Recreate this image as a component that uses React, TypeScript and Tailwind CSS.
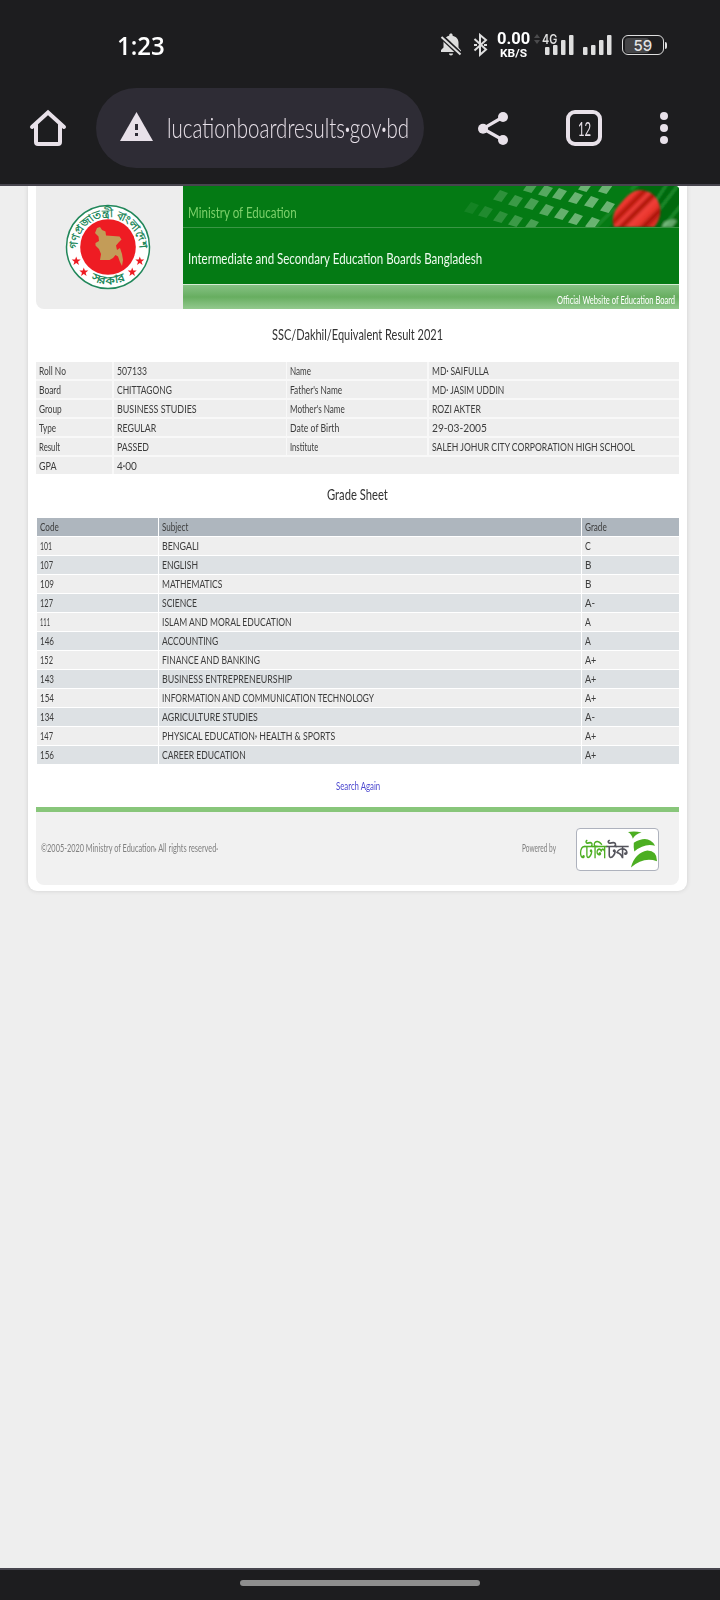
import { useLayoutEffect, useRef, useState } from "react";

/** Single-line text condensed horizontally to a given advance width. */
function Fit({ text, w, className = "", raise = true }: { text: string; w: number; className?: string; raise?: boolean }) {
  const ref = useRef<HTMLSpanElement>(null);
  const [scale, setScale] = useState(1);
  useLayoutEffect(() => {
    const natural = ref.current?.offsetWidth ?? 0;
    if (natural) setScale(w / natural);
  }, [text, w]);
  return (
    <span className={`block shrink-0 text-left ${className}`} style={{ width: w }}>
      <span ref={ref} className="inline-block origin-left whitespace-nowrap" style={{ transform: `scaleX(${scale})` }}>
        {raise
          ? text.split(/([.,])/).map((part, i) =>
              i % 2 ? (
                <span key={i} className="align-[0.22em] font-bold leading-[0]">{part}</span>
              ) : (
                part
              ),
            )
          : text}
      </span>
    </span>
  );
}

type Cell = [string, number];

const info: Cell[][] = [
  [["Roll No", 27], ["507133", 30], ["Name", 21], ["MD. SAIFULLA", 57]],
  [["Board", 22], ["CHITTAGONG", 55], ["Father's Name", 52], ["MD. JASIM UDDIN", 72]],
  [["Group", 23], ["BUSINESS STUDIES", 80], ["Mother's Name", 55], ["ROZI AKTER", 49]],
  [["Type", 17], ["REGULAR", 39], ["Date of Birth", 49], ["29-03-2005", 55]],
  [["Result", 21], ["PASSED", 32], ["Institute", 28], ["SALEH JOHUR CITY CORPORATION HIGH SCHOOL", 203]],
];

const grades: [Cell, Cell, Cell][] = [
  [["101", 12], ["BENGALI", 37], ["C", 6]],
  [["107", 13], ["ENGLISH", 36], ["B", 6]],
  [["109", 14], ["MATHEMATICS", 60], ["B", 6]],
  [["127", 13], ["SCIENCE", 35], ["A-", 10]],
  [["111", 10], ["ISLAM AND MORAL EDUCATION", 130], ["A", 6]],
  [["146", 14], ["ACCOUNTING", 56], ["A", 6]],
  [["152", 13], ["FINANCE AND BANKING", 98], ["A+", 11]],
  [["143", 14], ["BUSINESS ENTREPRENEURSHIP", 130], ["A+", 11]],
  [["154", 14], ["INFORMATION AND COMMUNICATION TECHNOLOGY", 212], ["A+", 11]],
  [["134", 14], ["AGRICULTURE STUDIES", 96], ["A-", 10]],
  [["147", 13], ["PHYSICAL EDUCATION, HEALTH & SPORTS", 173], ["A+", 11]],
  [["156", 14], ["CAREER EDUCATION", 84], ["A+", 11]],
];

function Bars() {
  return (
    <svg width="29" height="22" viewBox="0 0 29 22" fill="#dedede">
      <rect x="0" y="13" width="4.500" height="8" rx="1" />
      <rect x="8" y="11" width="4.500" height="10" rx="1" />
      <rect x="16" y="6" width="4.500" height="15" rx="1" />
      <rect x="24" y="1" width="4.500" height="20" rx="1" />
    </svg>
  );
}

function StatusBar() {
  return (
    <div className="flex h-[88px] items-start pl-[117px] pt-[30px] font-['Inter','Roboto',sans-serif] text-white">
      <div className="w-[323px] pt-[3px] font-['Open_Sans',sans-serif] text-[25px] font-semibold leading-[25px]">
        <Fit text="1:23" w={48} />
      </div>
      <svg className="mt-[3px]" width="22" height="24" viewBox="0 0 22 24">
        <path d="M11 .5c1 0 1.600.7 1.600 1.600v.7c3.600.8 5.900 3.400 5.900 6.700v5l2.500 3v1.500H1V17l2.500-2.500V9.500c0-3.300 2.300-6 5.700-6.700v-.7C9.200 1.200 10 .5 11 .5zM9 20.500h4c0 1.200-.8 2-2 2s-2-.8-2-2z" fill="#dedede" />
        <path d="M1 3l20 19" stroke="#1d1d1f" strokeWidth="5" />
        <path d="M1.500 4l19 17.500" stroke="#dedede" strokeWidth="2" />
      </svg>
      <svg className="ml-[11px] mt-[3px]" width="16" height="24" viewBox="0 0 16 24" fill="none" stroke="#dedede" strokeWidth="2">
        <path d="M1.500 6l11.500 10.500-6 5.200V2l6 5L1.500 17.500" />
        <path d="M1 12h3M11 12h3" strokeWidth="2.200" />
      </svg>
      <div className="ml-[7px] flex w-[34px] flex-col items-center font-['Roboto',sans-serif] font-bold">
        <Fit raise={false} text="0.00" w={33} className="mt-px text-[16px] leading-[16px]" />
        <Fit text="KB/S" w={27} className="text-[11.500px] leading-[12px]" />
      </div>
      <svg className="ml-[4px] mt-[4px]" width="6" height="10" viewBox="0 0 6 10" fill="#4b4b4d">
        <path d="M3 0l3 4H0zM3 10L0 6h6z" />
      </svg>
      <div className="relative ml-[5px] mt-[4px]">
        <Bars />
        <div className="absolute -left-[3px] top-0 bg-[#1d1d1f] text-[#dedede]">
          <Fit text="4G" w={15} className="text-[13px] font-semibold leading-[10px]" />
        </div>
      </div>
      <div className="ml-[9px] mt-[4px]"><Bars /></div>
      <div className="ml-[10px] mt-[5px] flex items-center">
        <div className="flex h-[20px] w-[42px] items-center rounded-[6px] border-[1.500px] border-[#dedede] p-[1.500px]">
          <div className="flex h-full w-[24px] items-center rounded-[3px] bg-[#454547] pl-[9px]">
            <Fit text="59" w={19} className="text-[15px] font-medium leading-[15px] text-[#e4e4e4]" />
          </div>
        </div>
        <div className="ml-[1px] h-[7px] w-[2px] rounded-r bg-[#dedede]" />
      </div>
    </div>
  );
}

function Toolbar() {
  return (
    <div className="flex h-[96px] items-start">
      <svg className="ml-[29px] mt-[21px]" width="38" height="38" viewBox="0 0 38 38" fill="none" stroke="#e8e1e9" strokeWidth="4" strokeLinecap="round" strokeLinejoin="round">
        <path d="M3 18L19 3.500 35 18" strokeLinejoin="miter" />
        <path d="M7 15.500V33a2 2 0 0 0 2 2h20a2 2 0 0 0 2-2V15.500" />
      </svg>
      <div className="ml-[29px] flex h-[80px] w-[328px] items-start rounded-full bg-[#2e2c35] pl-[24px]">
        <svg className="mt-[24px]" width="33" height="30" viewBox="0 0 33 30">
          <path d="M16.500 0L33 29H0z" fill="#e8e1e9" />
          <path d="M15 12h3v6h-3zM15 21h3v3h-3z" fill="#2e2c35" />
        </svg>
        <Fit text="lucationboardresults.gov.bd" w={242} className="ml-[14px] mt-[19px] text-[28px] font-light leading-[40px] text-[#e8e1e9]" />
      </div>
      <svg className="ml-[54px] mt-[23px]" width="30" height="35" viewBox="0 0 30 35" fill="#e8e1e9">
        <path d="M25 6L5 17.700 25 29" fill="none" stroke="#e8e1e9" strokeWidth="3.200" />
        <circle cx="25" cy="6" r="5" />
        <circle cx="5" cy="17.700" r="5" />
        <circle cx="25" cy="29" r="5" />
      </svg>
      <div className="ml-[58px] mt-[22px] flex h-[36px] w-[36px] items-center justify-center rounded-[9px] border-4 border-[#e8e1e9]">
        <Fit text="12" w={13} className="text-[20px] leading-[22px] text-[#e8e1e9]" />
      </div>
      <svg className="ml-[58px] mt-[23px]" width="8" height="34" viewBox="0 0 8 34" fill="#e8e1e9">
        <circle cx="4" cy="5" r="4" />
        <circle cx="4" cy="17" r="4" />
        <circle cx="4" cy="29" r="4" />
      </svg>
    </div>
  );
}

function Emblem() {
  const star = "M0-4.500L1.100-1.400 4.500-1.400 1.800.7 2.800 4 0 2.100-2.800 4-1.800.7-4.500-1.400-1.100-1.400z";
  return (
    <svg width="86" height="86" viewBox="-43 -43 86 86">
      <circle r="41.500" fill="#fff" stroke="#21875a" strokeWidth="1.500" />
      <circle r="27.800" fill="#ee1c23" />
      <path
        d="M-11-19L-8-20-6-17-2.500-15.500-2-11.500 5-11 11.500-10.500 13.500-7.500 11-5 8-1.500 9 3 12 1 14 7 15 13 14 19 12 15 10 9.500 7.500 8 5 11 1.500 13-8 13-7 7-9 2-12.500-1.500-12.500-4-9-6-9.500-10.500-13-14z"
        fill="#c39c58"
      />
      <g fill="#ee1c23">
        <path d={star} transform="translate(-31.800 14)" />
        <path d={star} transform="translate(-24.200 25)" />
        <path d={star} transform="translate(31.800 14)" />
        <path d={star} transform="translate(24.200 25)" />
      </g>
      <path id="arc-top" d="M-30.800 5A31 31 0 1 1 30.800 5" fill="none" />
      <path id="arc-bottom" d="M-37 0A37 37 0 0 0 37 0" fill="none" />
      <g fill="#21875a" fontSize="11" fontWeight="700" textAnchor="middle">
        <text><textPath href="#arc-top" startOffset="50%" textLength="98" lengthAdjust="spacingAndGlyphs">গণপ্রজাতন্ত্রী বাংলাদেশ</textPath></text>
        <text><textPath href="#arc-bottom" startOffset="50%" textLength="36" lengthAdjust="spacingAndGlyphs">সরকার</textPath></text>
      </g>
    </svg>
  );
}

const tiles = [
  [133, 0], [153, 2],
  [78, 1], [93, 5], [107, 8], [123, 12], [139, 16], [155, 21],
  [48, 10], [63, 15], [79, 18], [94, 24], [109, 28], [123, 33], [140, 37],
  [19, 22], [33, 26], [48, 31], [63, 35], [79, 39],
];

function FlagArt() {
  return (
    <svg className="block" width="226" height="41" viewBox="0 0 226 41">
      <defs>
        <linearGradient id="ball" x1="168" y1="8" x2="200" y2="40" gradientUnits="userSpaceOnUse">
          <stop offset="0" stopColor="#dd3024" />
          <stop offset=".2" stopColor="#f03a30" />
          <stop offset=".32" stopColor="#b0140b" />
          <stop offset=".42" stopColor="#f0403a" />
          <stop offset=".52" stopColor="#a8120a" />
          <stop offset=".62" stopColor="#f0403a" />
          <stop offset=".76" stopColor="#e8332b" />
          <stop offset=".86" stopColor="#a8160c" />
          <stop offset="1" stopColor="#e63229" />
        </linearGradient>
        <filter id="soft"><feGaussianBlur stdDeviation="1" /></filter>
      </defs>
      <g filter="url(#soft)">
        <path d="M230-4v50h-78l24-24 12-26z" fill="#05690f" />
        <path d="M142 42l20-20M178 4l8-8M206 46l28-34M214-2l-12 18M226-2l-20 26" stroke="#1f8a2c" strokeWidth="3" />
        <path d="M211 36l9-3 4 2-5 6h-10z" fill="#d9f2d9" opacity=".45" />
      </g>
      {tiles.map(([x, y]) => (
        <path key={`${x}-${y}`} d={`M${x - 1} ${y - 6}l8 3-6.500 9-8.500-2.500z`} fill="#d9f2d9" opacity={Math.min(0.48, x / 240)} />
      ))}
      <path d="M161 41c-3-9 0-17 7-24C177 6 184 2 193 5c12 3 16 17 14 24-1 5-3 9-6 12z" fill="url(#ball)" filter="url(#soft)" />
    </svg>
  );
}

function Header() {
  return (
    <div className="flex h-[123px]">
      <div className="flex w-[147px] justify-center rounded-bl-[8px] bg-[#ededed] pr-[4px] pt-[18px]">
        <Emblem />
      </div>
      <div className="flex-1">
        <div className="flex h-[41px] justify-between overflow-hidden rounded-tr-[4px] bg-[#047a14]">
          <Fit text="Ministry of Education" w={109} className="ml-[5px] mt-[16px] text-[15.500px] leading-[20px] text-[#7dd06b]" />
          <FlagArt />
        </div>
        <div className="h-[57px] border-t border-[#3a9645] bg-[#047a14] pt-[19px]">
          <Fit text="Intermediate and Secondary Education Boards Bangladesh" w={294} className="ml-[5px] text-[16px] leading-[22px] text-[#effbef]" />
        </div>
        <div className="flex h-[25px] justify-end border-t border-[#d5ecd3] bg-linear-to-b from-[#86c184] via-[#67ae60] to-[#93c98e] pr-[4px] pt-[8px]">
          <Fit text="Official Website of Education Board" w={118} className="text-[11px] leading-[14px] text-white" />
        </div>
      </div>
    </div>
  );
}

function InfoTable() {
  return (
    <div className="mt-[16px] flex w-[643px] flex-col gap-[2px] bg-[#f8f8f8] text-[11.500px] leading-[17px] text-[#3c3c3c]">
      {info.map((row) => (
        <div key={row[0][0]} className="grid h-[17px] grid-cols-[76px_172px_140px_1fr] gap-x-[1.500px]">
          {row.map(([t, w]) => (
            <div key={t} className="bg-[#eee] pl-[3px]"><Fit text={t} w={w} /></div>
          ))}
        </div>
      ))}
      <div className="grid h-[17px] grid-cols-[76px_1fr] gap-x-[1.500px]">
        <div className="bg-[#eee] pl-[3px]"><Fit text="GPA" w={18} /></div>
        <div className="bg-[#eee] pl-[3px]"><Fit text="4.00" w={20} /></div>
      </div>
    </div>
  );
}

function GradeTable() {
  return (
    <div className="ml-px mt-[12px] flex w-[642px] flex-col gap-px text-[11.500px] leading-[17px] text-[#3c3c3c]">
      <div className="grid h-[18px] grid-cols-[121px_422px_1fr] gap-x-px">
        {([["Code", 19], ["Subject", 26], ["Grade", 22]] as Cell[]).map(([t, w]) => (
          <div key={t} className="bg-[#aeb6be] pl-[3px]"><Fit text={t} w={w} /></div>
        ))}
      </div>
      {grades.map((row, i) => (
        <div key={row[0][0]} className="grid h-[18px] grid-cols-[121px_422px_1fr] gap-x-px">
          {row.map(([t, w], j) => (
            <div key={j} className={`pl-[3px] ${i % 2 ? "bg-[#dde1e4]" : "bg-[#eee]"}`}><Fit text={t} w={w} /></div>
          ))}
        </div>
      ))}
    </div>
  );
}

function Footer() {
  return (
    <div className="mt-[13px] flex h-[78px] items-start rounded-b-[8px] border-t-[5px] border-[#88c67a] bg-[#f1f1f1] pl-[5px] text-[11px] leading-[16px] text-[#808080]">
      <Fit text="©2005-2020 Ministry of Education, All rights reserved." w={177} className="mt-[28px]" />
      <Fit text="Powered by" w={34} className="ml-[304px] mt-[28px]" />
      <div className="ml-[20px] mt-[16px] flex h-[43px] w-[83px] items-center rounded-[4px] border border-[#aeb2bd] bg-white pl-[2px]">
        <div className="flex w-[49px] pt-[2px] text-[19px] font-bold leading-[22px]">
          <Fit text="টেলি" w={28} className="text-[#4cae22]" />
          <Fit text="টক" w={21} className="text-[#54545c]" />
        </div>
        <svg className="block" width="31" height="40" viewBox="-2 0 31 40" fill="#4cae22">
          <path d="M-2 1.500q7-1.500 14 .5-7 2-9 6.500-1-4.500-5-7z" />
          <path d="M4 12.500q15-9 22 3-11-3-21.500 6-1-4-.5-9z" />
          <path d="M1 38q4-15 17-17.500 10 0 10 11-14-5-27 6.500z" />
        </svg>
      </div>
    </div>
  );
}

export default function App() {
  return (
    <div className="flex h-[1600px] w-[720px] flex-col overflow-hidden bg-[#eee] font-['Lato','Liberation_Sans',sans-serif]">
      <div className="h-[186px] border-b-2 border-[#47454e] bg-[#1d1d1f]">
        <StatusBar />
        <Toolbar />
      </div>
      <div className="flex-1">
        <div className="ml-[28px] h-[705px] w-[659px] rounded-b-[9px] bg-white pl-[8px] pr-[8px] shadow-[0_0_4px_#cfcfcf] [clip-path:inset(0_-6px_-6px_-6px)]">
          <Header />
          <Fit text="SSC/Dakhil/Equivalent Result 2021" w={171} className="mx-auto mt-[13px] text-[16px] leading-[24px] text-[#333]" />
          <InfoTable />
          <Fit text="Grade Sheet" w={61} className="mx-auto mt-[8px] text-[16px] leading-[24px] text-[#333]" />
          <GradeTable />
          <Fit text="Search Again" w={44} className="mx-auto mt-[14px] text-[11px] leading-[16px] text-[#4c48cf]" />
          <Footer />
        </div>
      </div>
      <div className="flex h-[32px] items-start justify-center border-t-2 border-[#47454e] bg-[#1d1d1f] pt-[10px]">
        <div className="h-[6px] w-[240px] rounded-full bg-[#8e8e8e]" />
      </div>
    </div>
  );
}
